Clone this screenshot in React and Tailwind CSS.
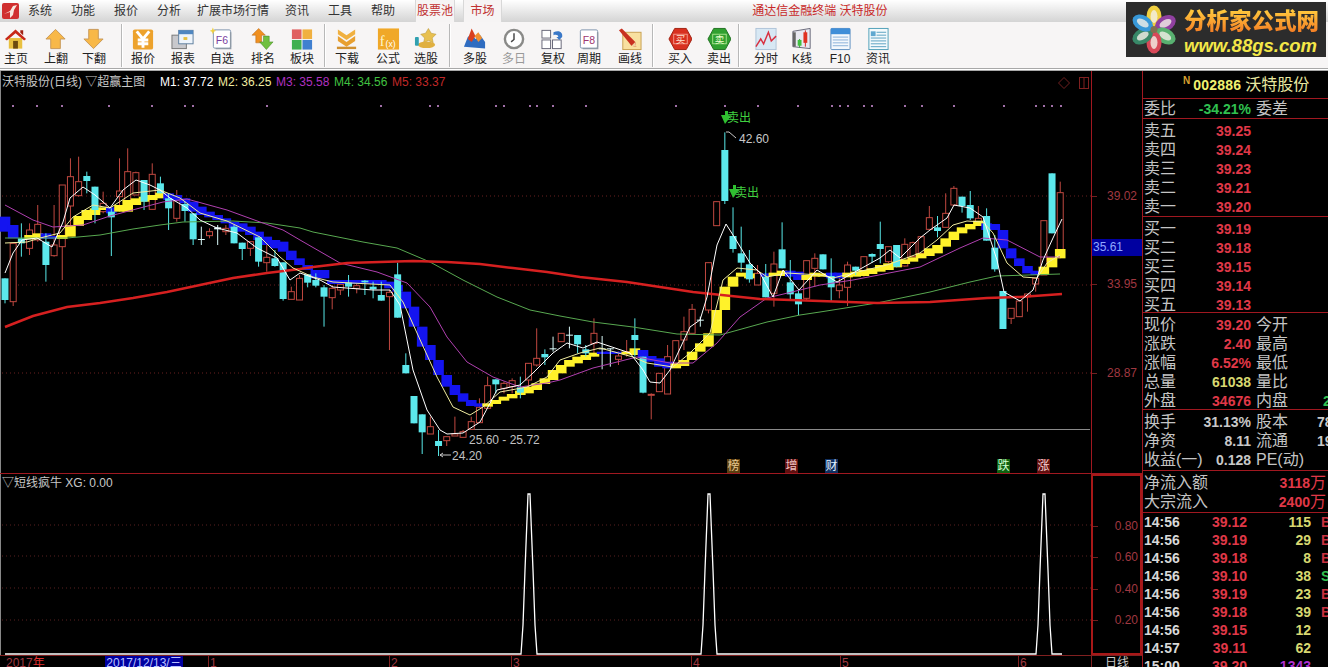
import React from "react";

const candleX = (i) => 5 + 8.18 * i;

// candles per zoom block: type, body top, body bottom, high, low
const candleSegs = [
  { y0: 130, rows: [
    ["c",445,510,445,520],["r",340,515,340,528],["c",325,340,280,380],["r",300,355,280,375],["r",283,330,225,335],["c",335,405,310,455],["r",345,377,225,380],["r",165,350,165,450],["r",140,228,85,290],["r",155,197,80,200],
    ["c",138,153,125,190],["c",170,240,170,280],["r",220,245,185,250],["c",245,262,235,378],["r",183,200,85,245],["r",125,240,55,245],["r",128,195,125,195],["c",150,215,150,240],["r",133,238,100,238],["c",160,190,140,190],
    ["c",205,235,190,300],["r",212,265,180,275],["c",222,243,215,275],["c",250,328,250,345],["w",327,329,290,345],["r",305,317,295,325],["w",292,298,285,345],["r",295,305,285,315],["c",290,340,285,340],["c",338,357,338,390],
    ["r",335,355,335,378],["c",322,395,322,410],["r",382,398,345,425],["c",385,408,360,410],["c",397,507,397,512],
  ]},
  { y0: 230, rows: [
    ["r",185,208,170,208],["r",145,210,135,210],["c",133,158,133,172],["c",150,167,130,172],["c",172,200,165,290],["r",175,203,165,238],["r",163,180,150,195],["c",158,170,135,200],["r",167,175,160,190],["c",152,157,150,195],
    ["c",170,178,155,205],["c",195,212,155,212],["r",187,200,180,360],["c",133,263,98,263],["c",405,430,370,430],["c",498,580,498,580],["c",553,607,553,672],["r",590,612,560,612],["c",633,648,600,678],["r",620,632,620,648],
    ["r",612,618,560,618],["r",605,622,600,622],["r",575,598,560,598],["r",532,578,505,578],["r",467,535,440,535],["c",448,463,448,490],["r",460,475,455,490],["r",452,470,445,490],["c",472,488,440,505],["r",400,450,400,470],
    ["r",385,405,295,410],["c",372,382,358,405],["w",355,358,320,365],
  ]},
  { y0: 100, rows: [
    ["r",700,725,700,725],["w",704,707,680,745],["c",705,733,705,760],["c",748,760,735,770],["r",700,730,655,770],["w",745,747,708,808],["w",745,747,745,800],["r",768,778,755,795],["r",755,760,720,770],["c",705,720,655,770],
    ["c",770,878,770,880],["r",883,886,880,958],["r",820,875,820,875],["r",770,882,735,882],["r",722,790,722,800],["r",695,720,650,750],["r",628,700,612,700],["w",659,661,650,680],["r",488,630,488,640],["r",305,377,305,377],
    ["c",150,303,97,312],["c",408,447,322,458],["c",460,488,380,515],["c",493,538,450,548],["r",520,555,495,555],["c",530,592,492,592],["r",492,580,455,620],["c",448,505,367,505],["c",547,583,480,600],["c",580,613,570,645],
    ["r",482,595,482,600],["r",475,505,460,560],
  ]},
  { y0: 150, rows: [
    ["c",313,358,313,358],["c",378,412,325,455],["r",405,422,370,445],["r",345,412,335,468],["c",350,362,350,375],["r",320,365,320,380],["c",312,320,310,338],["c",282,297,215,340],["r",290,335,290,340],["c",285,350,285,352],
    ["r",283,348,265,350],["r",278,320,275,320],["r",260,310,260,320],["r",203,238,168,240],["c",232,243,198,262],["r",190,232,130,232],["r",115,165,108,168],["c",140,168,140,188],["c",165,205,123,210],["r",205,215,168,215],
    ["c",198,272,175,272],["c",293,358,255,365],["c",423,537,423,537],["r",475,505,475,522],["r",453,500,453,500],["r",432,440,432,485],["r",385,402,385,425],["r",212,375,212,375],["c",70,250,70,250],["r",128,300,95,325],
  ]},
];

// step band under the candles: colour, top, bottom
const bandSegs = [
  { y0: 130, rows: [
    ["b",260,305],["b",285,325],null,["y",315,328],["y",310,325],["b",310,327],["b",318,327],["y",315,327],["y",285,320],["y",258,288],
    ["y",240,270],["y",235,255],["y",232,240],["b",232,250],["y",225,245],["y",210,245],["y",205,225],["y",200,215],["y",195,210],["y",188,205],
    ["b",190,210],["b",195,212],["b",205,220],["b",215,245],["b",230,255],["b",245,262],["b",255,270],["b",265,280],["b",275,295],["b",280,305],
    ["b",290,315],["b",305,330],["b",320,345],["b",330,355],
  ]},
  { y0: 230, rows: [
    ["b",35,65],["b",62,90],["b",85,105],["b",105,120],["b",120,145],["b",120,145],["b",150,162],["b",150,162],["b",150,162],["b",150,162],
    ["b",150,162],["b",150,162],["b",150,162],["b",155,175],["b",165,185],["b",185,235],["b",230,290],["b",290,350],["b",345,390],["b",390,435],
    ["b",435,470],["b",465,495],["b",490,515],["b",510,528],["b",520,530],["y",520,530],["y",510,522],["y",500,512],["y",492,505],["y",482,495],
    ["y",470,490],["y",460,480],["y",445,462],["y",420,450],["y",405,430],["y",390,410],["y",380,400],
  ]},
  { y0: 100, rows: [
    ["y",765,780],["y",758,770],["b",755,762],["b",755,762],["b",755,762],["y",755,763],["y",745,765],["b",750,775],["b",768,785],["b",775,800],
    ["b",785,805],["y",790,805],["y",780,798],["y",755,780],["y",730,755],["y",700,740],["y",630,700],["y",560,630],["y",530,560],["y",518,530],
    ["y",520,535],null,["b",520,530],["y",518,528],["y",512,528],["b",512,530],["b",515,540],["y",525,540],["y",518,530],
  ]},
  { y0: 150, rows: [
    ["y",370,380],["b",368,385],["b",368,385],["y",368,382],["y",365,380],["y",360,378],["y",355,372],["y",345,365],["y",340,360],["y",335,352],
    ["y",328,342],["y",322,335],["y",310,325],["y",295,318],["y",285,310],["y",265,290],["y",245,270],["y",232,250],["y",222,238],["y",212,228],
    ["b",220,240],["b",222,240],["b",240,295],["b",295,325],["b",325,348],["b",348,370],["b",362,375],["y",350,375],["y",322,352],["y",297,325],
  ]},
];

const candles = [];
let candleIdx = 0;
candleSegs.forEach((seg) => seg.rows.forEach((r) => {
  candles.push({ i: candleIdx++, type: r[0], top: seg.y0 + r[1] / 3, bot: seg.y0 + r[2] / 3, hi: seg.y0 + r[3] / 3, lo: seg.y0 + r[4] / 3 });
}));

const bands = [];
let bandIdx = 0;
bandSegs.forEach((seg) => seg.rows.forEach((r) => {
  if (r) bands.push({ i: bandIdx, color: r[0], top: seg.y0 + r[1] / 3, bot: seg.y0 + r[2] / 3 });
  bandIdx++;
}));

const ma5 = "5,327 33,316 67,307 100,303 133,298 167,292 200,285 233,278 267,273 300,269 313,267 347,263 380,262 413,261 447,262 480,264 513,268 547,272 580,277 627,282 693,292 760,299 820,301 877,303 930,302 987,298 1020,297 1062,294";
const ma4 = "5,238 33,238 67,238 100,235 133,229 160,225 183,222 233,221 267,223 300,228 313,232 363,242 397,248 430,262 463,280 497,297 530,310 560,316 593,322 633,327 677,334 720,335 767,322 800,315 820,312 877,303 930,292 970,282 997,276 1060,274";
const ma3 = "5,205 33,220 53,227 83,225 110,216 140,208 163,202 187,199 227,210 260,222 283,230 300,240 340,263 377,272 407,283 430,307 447,337 467,362 493,377 520,387 547,383 560,380 593,368 637,357 670,363 693,363 717,343 740,317 767,298 800,290 820,285 853,280 920,267 960,248 983,238 1007,240 1040,257 1060,257";
const ma2 = "5,243 27,242 40,238 60,233 73,217 93,205 110,208 133,193 160,190 180,198 200,213 227,221 260,237 280,257 293,268 313,277 333,282 390,285 403,302 417,333 437,377 453,407 470,415 483,407 500,392 527,387 547,377 560,360 580,353 600,348 633,357 647,363 673,367 690,353 710,333 723,280 737,268 757,270 767,277 787,273 820,275 833,278 853,273 887,265 920,253 937,240 953,225 967,221 983,222 993,233 1007,263 1023,277 1037,278 1047,263 1060,255";
const ma1 = "5,273 13,253 22,240 37,238 52,247 63,222 70,198 83,187 95,195 110,208 123,190 136,180 150,185 160,190 170,198 187,208 200,220 217,228 237,233 257,248 277,258 290,280 300,273 320,280 333,287 373,290 390,290 400,305 413,370 427,410 440,430 447,434 463,433 480,422 497,390 520,385 533,373 553,353 567,343 583,348 597,342 630,353 643,370 650,382 660,383 670,370 690,327 700,320 707,297 717,245 726,224 733,235 750,263 760,273 773,297 783,270 799,290 817,270 837,282 853,273 880,258 890,250 900,258 920,238 930,230 947,218 954,205 970,208 983,217 997,260 1004,292 1020,301 1033,290 1043,260 1053,238 1062,219";

const signalDots = [13,37,62,109,152,185,193,267,381,430,438,496,504,530,537,553,586,676,725,758,798,832,840,848,864,872,905,922,954,1004,1036,1044,1052,1061];

const menus = [
  { name: "系统", cls: "ml-[9px]" },
  { name: "功能", cls: "ml-[19px]" },
  { name: "报价", cls: "ml-[19px]" },
  { name: "分析", cls: "ml-[19px]" },
  { name: "扩展市场行情", cls: "ml-[16px]" },
  { name: "资讯", cls: "ml-[16px]" },
  { name: "工具", cls: "ml-[19px]" },
  { name: "帮助", cls: "ml-[19px]" },
];

const Doc = ({ text, color = "#7a3fa0" }) => (
  <>
    <rect x="3.5" y="2.5" width="18" height="19" rx="1.5" fill="#fff" stroke="#7d93ad" />
    <path d="M21.5 5v17H6" fill="none" stroke="#8f9aa6" strokeWidth="1.5" />
    <text x="12.5" y="17" textAnchor="middle" fontSize="11" fill={color}>{text}</text>
  </>
);

const icons = {
  home: (
    <>
      <rect x="5" y="11" width="14" height="11" fill="#e8c040" />
      <rect x="9.5" y="14" width="5" height="8" fill="#6b4a10" />
      <path d="M1 12 12 2l11 10-2 1.5L12 6 3 13.5z" fill="#c82818" />
      <path d="M17 3h3v5l-3-2.5z" fill="#a02010" />
    </>
  ),
  up: <path d="M12 2 22 12h-5v10H7V12H2z" fill="#f8b848" stroke="#c89858" />,
  down: <path d="M7 2h10v10h5L12 22 2 12h5z" fill="#f8b848" stroke="#c89858" />,
  yen: (
    <>
      <rect x="2" y="2" width="21" height="21" rx="2" fill="#eda22c" />
      <path d="M6 4l6.500 8L19 4M12.500 12v9M7 13h11M7 17h11" fill="none" stroke="#fff" strokeWidth="3" />
    </>
  ),
  report: (
    <>
      <rect x="1" y="8" width="15" height="14" fill="#c8c8cc" stroke="#777" />
      <rect x="8" y="3" width="15" height="14" fill="#eef4fb" stroke="#5f7f9f" />
      <rect x="8" y="3" width="15" height="4" fill="#4f86c0" />
      <rect x="13" y="10" width="4" height="3" fill="#e8c040" />
    </>
  ),
  f6: (
    <>
      <Doc text="F6" />
      <path d="M3 0l1 2.500L6.500 3.500 4 4.500 3 7 2 4.500-.5 3.500 2 2.500z" fill="#f0d040" />
    </>
  ),
  rank: (
    <>
      <path d="M8 1 15 8h-4v8H5V8H1z" fill="#f09020" stroke="#b06010" strokeWidth=".5" />
      <path d="M13 9h6v6h4l-7 8-7-8h4z" fill="#70c040" stroke="#408020" strokeWidth=".5" />
    </>
  ),
  block: (
    <>
      <rect x="2" y="2" width="10" height="10" fill="#e06060" />
      <rect x="13" y="2" width="10" height="10" fill="#f0b040" />
      <rect x="2" y="13" width="10" height="10" fill="#40b050" />
      <rect x="13" y="13" width="10" height="10" fill="#4080d0" />
    </>
  ),
  dl: (
    <>
      <path d="M3 2l9 6 9-6v5l-9 6-9-6z" fill="#f0b040" />
      <path d="M3 9l9 6 9-6v5l-9 6-9-6z" fill="#e8a030" />
      <rect x="2" y="20" width="20" height="2.500" fill="#d09030" />
    </>
  ),
  fx: (
    <>
      <rect x="2" y="1" width="22" height="22" fill="#f0a828" />
      <text x="4" y="19" fontSize="15" fontFamily="Liberation Serif, serif" fill="#fff8d0">f</text>
      <text x="10" y="20" fontSize="9" fill="#fff">(x)</text>
    </>
  ),
  pick: (
    <>
      <path d="M15 1l3 5 5 1-4 4 1 5-5-2.500L10 16l1-5-4-4 5-1z" fill="#e8c050" stroke="#b09030" strokeWidth=".5" />
      <ellipse cx="13" cy="18" rx="9" ry="3.500" fill="#e0b040" />
      <rect x="1" y="10" width="4" height="9" rx="1" fill="#30a0b0" />
    </>
  ),
  multi: (
    <>
      <path d="M1 20 5 10l4-3 4 5 5-4 5 7 0 7z" fill="#2f6cc0" />
      <path d="M5 12 9 1l4 8-4 6z" fill="#d84020" />
      <path d="M12 9l4-4 4 6-4 4z" fill="#f09030" />
    </>
  ),
  clock: (
    <>
      <circle cx="12.500" cy="12" r="9.500" fill="#fff" stroke="#8a8a88" strokeWidth="2.500" />
      <path d="M12.500 6v6.500l-3 2.500" fill="none" stroke="#444" strokeWidth="1.500" />
    </>
  ),
  adjust: (
    <>
      <rect x="1" y="3" width="9" height="8" fill="#fff" stroke="#667" />
      <rect x="1" y="13" width="9" height="9" fill="#fff" stroke="#667" />
      <rect x="12" y="13" width="9" height="9" fill="#fff" stroke="#667" />
      <path d="M13 5c6-3 10 0 9 5l-3 3-3-3h2c0-2-2-3-5-2z" fill="#3a78c8" />
    </>
  ),
  f8: <Doc text="F8" color="#a03870" />,
  draw: (
    <>
      <rect x="5" y="5" width="19" height="18" fill="#f8e0a0" stroke="#c8a050" />
      <path d="M1 3 4 1l14 14 1 5-5-1z" fill="#c83020" />
      <path d="M14 19l4-4 1 5z" fill="#f0d0a0" />
    </>
  ),
  buy: (
    <>
      <path d="M7 1h12l6 11-6 11H7L1 12z" fill="#d83020" stroke="#a02010" />
      <rect x="6" y="7" width="14" height="10" fill="none" stroke="#f8b0a0" strokeWidth=".8" />
      <text x="13" y="16" textAnchor="middle" fontSize="10" fill="#ffe0d0">买</text>
    </>
  ),
  sell: (
    <>
      <path d="M7 1h12l6 11-6 11H7L1 12z" fill="#30a030" stroke="#207020" />
      <rect x="6" y="7" width="14" height="10" fill="none" stroke="#c0f0a0" strokeWidth=".8" />
      <text x="13" y="16" textAnchor="middle" fontSize="10" fill="#f0ffd0">卖</text>
    </>
  ),
  time: (
    <>
      <rect x="2" y="1" width="21" height="22" fill="#d8e8f4" stroke="#b0c4d8" />
      <path d="M2 20l5-8 3 5 5-12 3 9 5-5" fill="none" stroke="#d83040" strokeWidth="1.500" />
    </>
  ),
  kline: (
    <>
      <path d="M3 4 21 1v21L3 20z" fill="#e8e8f0" stroke="#667" />
      <path d="M3 5h3v15H3z" fill="#666" />
      <path d="M10 12v9" stroke="#30a030" />
      <rect x="8" y="13" width="4" height="6" fill="#40c040" />
      <path d="M16 3v17" stroke="#d02020" />
      <rect x="14" y="5" width="4" height="11" fill="#e03020" />
    </>
  ),
  f10: (
    <>
      <rect x="3" y="1" width="20" height="22" rx="1" fill="#f4f8fc" stroke="#5f8fc0" />
      <rect x="3" y="1" width="20" height="6" fill="#3f8ed8" />
      <path d="M5 10h16M5 13h16M5 16h16M5 19h16" stroke="#88b0d8" />
    </>
  ),
  news: (
    <>
      <rect x="3" y="1" width="20" height="22" fill="#f4fafc" stroke="#4f9fb8" />
      <rect x="5" y="4" width="5" height="5" fill="#60a8d0" />
      <path d="M11 5h10M11 8h10M5 11h16M5 14h16M5 17h16M5 20h16" stroke="#58a0c0" />
    </>
  ),
};

const tools = [
  { label: "主页", icon: "home", cls: "-ml-[2px]" },
  { label: "上翻", icon: "up", cls: "ml-[4px]" },
  { label: "下翻", icon: "down", cls: "ml-[2px]" },
  { sep: true, cls: "ml-[9px]" },
  { label: "报价", icon: "yen", cls: "ml-[2px]" },
  { label: "报表", icon: "report", cls: "ml-[4px]" },
  { label: "自选", icon: "f6", cls: "ml-[3px]" },
  { label: "排名", icon: "rank", cls: "ml-[5px]" },
  { label: "板块", icon: "block", cls: "ml-[3px]" },
  { sep: true, cls: "ml-[4px]" },
  { label: "下载", icon: "dl", cls: "ml-[3px]" },
  { label: "公式", icon: "fx", cls: "ml-[5px]" },
  { label: "选股", icon: "pick", cls: "ml-[2px]" },
  { sep: true, cls: "ml-[5px]" },
  { label: "多股", icon: "multi", cls: "ml-[6px]" },
  { label: "多日", icon: "clock", cls: "ml-[3px]", off: true },
  { label: "复权", icon: "adjust", cls: "ml-[3px]" },
  { label: "周期", icon: "f8", cls: "ml-0" },
  { label: "画线", icon: "draw", cls: "ml-[5px]" },
  { sep: true, cls: "ml-[4px]" },
  { label: "买入", icon: "buy", cls: "ml-[8px]" },
  { label: "卖出", icon: "sell", cls: "ml-[3px]" },
  { sep: true, cls: "ml-[1px]" },
  { label: "分时", icon: "time", cls: "ml-[8px]" },
  { label: "K线", icon: "kline", cls: "ml-0" },
  { label: "F10", icon: "f10", cls: "ml-[2px]" },
  { label: "资讯", icon: "news", cls: "ml-[2px]" },
];

const MenuBar = () => (
  <div className="flex h-[22px] items-center bg-gradient-to-b from-white to-[#d4d4d4] text-xs text-[#333]">
    <svg width="17" height="16" viewBox="0 0 17 16" className="ml-[2px]">
      <rect width="17" height="16" rx="2" fill="#d03030" />
      <path d="M2 11 8 8l3-5 4-1-3 5-1 5-3 3V9z" fill="#f8e8e0" />
    </svg>
    {menus.map((m) => (
      <span key={m.name} className={m.cls}>{m.name}</span>
    ))}
    <span className="ml-[20px] flex h-[22px] w-[40px] items-center justify-center border-x border-[#d8d8d8] bg-[#f6f4f4] text-[#c03030]">股票池</span>
    <span className="ml-[8px] flex h-[22px] w-[39px] items-center justify-center border-x border-[#d8d8d8] bg-[#f6f4f4] text-[#c03030]">市场</span>
    <span className="ml-[250px] text-[#c82828]">通达信金融终端&nbsp;沃特股份</span>
  </div>
);

const Toolbar = () => (
  <div className="flex h-[46px] items-start bg-[#f7f5f5]">
    {tools.map((t, i) =>
      t.sep ? (
        <div key={i} className={`${t.cls} mt-[2px] h-[43px] w-[2px] border-r border-white bg-[#b8b8b8]`} />
      ) : (
        <div key={i} className={`${t.cls} flex w-[36px] shrink-0 flex-col items-center pt-[5px]`}>
          <svg width="24" height="24" viewBox="0 0 25 24">{icons[t.icon]}</svg>
          <span className={`mt-[1px] whitespace-nowrap text-xs leading-[14px] ${t.off ? "text-[#999]" : "text-[#222]"}`}>{t.label}</span>
        </div>
      )
    )}
  </div>
);

const Logo = () => (
  <div className="absolute left-[1126px] top-[2px] flex h-[55px] w-[200px] bg-[#2c2c2c]">
    <svg width="56" height="55" viewBox="-28 -27 56 54" className="shrink-0">
      {[["#f0d040", 0], ["#9040a0", 62], ["#58b070", 120], ["#d84858", 180], ["#388868", 240], ["#3898d8", 300]].map(([c, a]) => (
        <g key={a} transform={`rotate(${a})`}>
          <ellipse cx="0" cy="-13" rx="7.500" ry="11" fill={c} />
          <ellipse cx="0" cy="-13" rx="3.500" ry="6.500" fill="#f4f0e8" opacity=".8" />
        </g>
      ))}
      <circle r="3.500" fill="#807050" />
    </svg>
    <div className="ml-[2px] flex flex-col pt-[6px] leading-none">
      <span className="whitespace-nowrap bg-gradient-to-b from-[#ffd040] to-[#f07020] bg-clip-text text-[22.500px] font-black leading-[28px] text-transparent">分析家公式网</span>
      <span className="mt-[1px] whitespace-nowrap text-[18.500px] font-bold italic leading-[18px] text-[#f4e848]">www.88gs.com</span>
    </div>
  </div>
);

const MainPlot = () => (
  <svg width="1091" height="402" viewBox="0 71 1091 402" className="block">
    {[196, 285, 373].map((y) => (
      <line key={y} x1="2" x2="1091" y1={y} y2={y} stroke="#6a2020" strokeDasharray="1 3" />
    ))}
    {signalDots.map((x) => (
      <rect key={x} x={x - 1} y="105" width="2" height="2" fill="#a070a8" />
    ))}
    <line x1="470" x2="1090" y1="429.500" y2="429.500" stroke="#8a8a8a" />

    {candles.filter((c) => c.type === "r").map((c) => (
      <g key={c.i} stroke="#c04840">
        <line x1={candleX(c.i)} x2={candleX(c.i)} y1={c.hi} y2={c.lo} />
        <rect x={candleX(c.i) - 3} y={c.top} width="6" height={c.bot - c.top} fill="#000" />
      </g>
    ))}
    {bands.map((b) => (
      <rect key={b.i} x={candleX(b.i) - 5.300} y={b.top} width="10.600" height={b.bot - b.top} fill={b.color === "y" ? "#fff22a" : "#1414f0"} />
    ))}
    {candles.filter((c) => c.type !== "r").map((c) => (
      <g key={c.i}>
        <line x1={candleX(c.i)} x2={candleX(c.i)} y1={c.hi} y2={c.lo} stroke={c.type === "w" ? "#d8f8f8" : "#58e8e8"} />
        <rect x={candleX(c.i) - 3.500} y={c.top} width="7" height={Math.max(c.bot - c.top, 1)} fill={c.type === "w" ? "#e0ffff" : "#5ce8ec"} />
      </g>
    ))}

    <polyline points={ma4} fill="none" stroke="#58a850" />
    <polyline points={ma3} fill="none" stroke="#b040b0" />
    <polyline points={ma5} fill="none" stroke="#d62020" strokeWidth="2.500" />
    <polyline points={ma2} fill="none" stroke="#f0eca0" />
    <polyline points={ma1} fill="none" stroke="#fff" />

    <path d="M721 115h4v-4h3v4l3 1-6 8z" fill="#30c030" />
    <text x="727" y="122" fontSize="12" fill="#40d040">卖出</text>
    <path d="M729 189h4v-4h3v4l3 1-6 8z" fill="#30c030" />
    <text x="735" y="197" fontSize="12" fill="#40d040">卖出</text>

    <path d="M726 132h3l7 6" fill="none" stroke="#c8c8c8" />
    <text x="739" y="143" fontSize="12" fill="#c8c8c8">42.60</text>
    <text x="469" y="444" fontSize="12" fill="#c0c0c0">25.60 - 25.72</text>
    <path d="M451 455h-11l3-2m-3 2 3 2" fill="none" stroke="#c8c8c8" />
    <text x="452" y="460" fontSize="12" fill="#c0c0c0">24.20</text>

    <path d="M1064 77.500l5.500 5.500-5.500 5.500-5.500-5.500z" fill="none" stroke="#702020" />
    <rect x="1079.500" y="77.500" width="9" height="11" fill="none" stroke="#802020" />
    <line x1="1084" x2="1084" y1="77" y2="89" stroke="#802020" />
  </svg>
);

const events = [
  { t: "榜", x: 726, bg: "#5a3e10", fg: "#e8c890" },
  { t: "增", x: 784, bg: "#601010", fg: "#f0c0c0" },
  { t: "财", x: 824, bg: "#103060", fg: "#e0f0ff" },
  { t: "跌", x: 996, bg: "#106010", fg: "#d0ffd0" },
  { t: "涨", x: 1036, bg: "#601010", fg: "#f8d0d0" },
];

const Axis = ({ labels }) => (
  <div className="relative w-[50px] shrink-0 text-xs text-[#a03840]">
    {labels.map(([v, y]) => (
      <React.Fragment key={v}>
        <span className="absolute left-0 h-px w-[5px] bg-[#702020]" style={{ top: y }} />
        <span className="absolute right-[5px] leading-[14px]" style={{ top: y - 7 }}>{v}</span>
      </React.Fragment>
    ))}
  </div>
);

const MainPane = () => (
  <div className="flex h-[403px] border-b border-[#a01820]">
    <div className="relative w-[1091px] shrink-0 border-l border-[#888]">
      <div className="absolute -left-px top-0"><MainPlot /></div>
      <div className="absolute left-[1px] top-[4px] flex whitespace-nowrap text-xs leading-[14px] text-[#c8c8c8]">
        <span className="w-[158px]">沃特股份(日线) ▽超赢主图</span>
        <span className="w-[58px] text-white">M1: 37.72</span>
        <span className="w-[58px] text-[#f0eca0]">M2: 36.25</span>
        <span className="w-[58px] text-[#b030c0]">M3: 35.58</span>
        <span className="w-[58px] text-[#40c040]">M4: 34.56</span>
        <span className="w-[58px] text-[#c02828]">M5: 33.37</span>
      </div>
      {events.map((e) => (
        <span
          key={e.t}
          className="absolute top-[388px] h-[14px] w-[13px] text-center text-xs leading-[14px]"
          style={{ left: e.x, background: e.bg, color: e.fg }}
        >
          {e.t}
        </span>
      ))}
    </div>
    <div className="relative flex border-l border-[#a01820]">
      <Axis labels={[["39.02", 125], ["33.95", 213], ["28.87", 302]]} />
      <span className="absolute left-0 top-[168px] h-[17px] w-[50px] bg-[#0000a0] pl-px text-xs leading-[17px] text-[#90a8ff]">35.61</span>
    </div>
  </div>
);

const SubPane = () => (
  <div className="flex h-[181px]">
    <div className="relative w-[1091px] shrink-0 border-l border-[#888]">
      <svg width="1091" height="181" viewBox="0 474 1091 181" className="absolute -left-px top-0 block">
        {[525, 556, 588, 620].map((y) => (
          <line key={y} x1="2" x2="1091" y1={y} y2={y} stroke="#5a2020" strokeDasharray="1 3" />
        ))}
        <polyline
          points="5,654 521,654 523,625 525,570 528,494 530,494 533,570 535,625 537,654 701,654 703,625 705,570 708,494 710,494 713,570 715,625 717,654 1036,654 1038,625 1040,570 1043,494 1045,494 1048,570 1050,625 1052,654 1062,654"
          fill="none"
          stroke="#fff"
          strokeWidth="1.300"
        />
      </svg>
      <span className="absolute left-[1px] top-[2px] whitespace-nowrap text-xs leading-[14px] text-[#c8c8c8]">▽短线疯牛 XG: 0.00</span>
    </div>
    <div className="w-[51px] shrink-0 border-2 border-[#a81818]">
      <Axis labels={[["0.80", 50], ["0.60", 81], ["0.40", 113], ["0.20", 144]]} />
    </div>
  </div>
);

const TimeAxis = () => (
  <div className="flex h-[12px] border-t border-[#802020] text-xs leading-[14px]">
    <div className="relative w-[1091px] shrink-0 overflow-hidden text-[#a03840]">
      <span className="absolute left-[6px] top-0">2017<span className="text-[#e03030]">年</span></span>
      <span className="absolute left-[105px] top-0 w-[78px] bg-[#0000a0] text-center text-[#b8c0ff]">2017/12/13/三</span>
      {[["1", 208], ["2", 389], ["3", 511], ["4", 691], ["5", 840], ["6", 1018]].map(([t, x]) => (
        <span key={t} className="absolute top-0 border-l border-[#802020] pl-px" style={{ left: x }}>{t}</span>
      ))}
    </div>
    <div className="w-[51px] shrink-0 border-l border-[#802020] text-center text-[#c8c8c8]">日线</div>
  </div>
);

const Row = ({ label, value, cls = "text-[#e03848]", label2, extra, extraCls }) => (
  <div className="flex h-[19px] items-center whitespace-nowrap">
    <span className="w-[38px] shrink-0 text-base text-[#c4c4c4]">{label}</span>
    <span className={`w-[69px] shrink-0 text-right text-sm font-bold ${cls}`}>{value}</span>
    {label2 && <span className="ml-[5px] w-[32px] shrink-0 text-base text-[#c4c4c4]">{label2}</span>}
    {extra && <span className={`text-sm font-bold ${extraCls}`}>{extra}</span>}
  </div>
);

const ticks = [
  ["14:56", "39.12", "115", "B"], ["14:56", "39.19", "29", "B"], ["14:56", "39.18", "8", "B"],
  ["14:56", "39.10", "38", "S"], ["14:56", "39.19", "23", "B"], ["14:56", "39.18", "39", "B"],
  ["14:56", "39.15", "12", ""], ["14:57", "39.11", "62", ""], ["15:00", "39.20", "1343", ""],
];

const RightPanel = () => (
  <div className="w-[186px] shrink-0 overflow-hidden border-l border-[#a01820] pl-px">
    <div className="-ml-px flex h-[28px] items-center border-b border-[#a01820] pl-[40px] whitespace-nowrap">
      <span className="mb-[8px] text-[10px] font-bold text-[#d8a030]">N</span>
      <span className="ml-[3px] text-sm font-bold tracking-[0.2px] text-[#f0f070]">002886</span>
      <span className="ml-[4px] text-base text-[#e8e8a0]">沃特股份</span>
    </div>
    <div className="-ml-px h-[20px] border-b border-[#a01820] pl-px">
      <Row label="委比" value="-34.21%" cls="text-[#30c050]" label2="委差" />
    </div>
    <div className="-ml-px h-[98px] border-b border-[#a01820] pl-px pt-[2px]">
      {[["卖五", "39.25"], ["卖四", "39.24"], ["卖三", "39.23"], ["卖二", "39.21"], ["卖一", "39.20"]].map(([l, v]) => (
        <Row key={l} label={l} value={v} />
      ))}
    </div>
    <div className="-ml-px h-[96px] border-b border-[#a01820] pl-px pt-[2px]">
      {[["买一", "39.19"], ["买二", "39.18"], ["买三", "39.15"], ["买四", "39.14"], ["买五", "39.13"]].map(([l, v]) => (
        <Row key={l} label={l} value={v} />
      ))}
    </div>
    <div className="-ml-px h-[97px] border-b border-[#a01820] pl-px pt-[2px]">
      <Row label="现价" value="39.20" label2="今开" />
      <Row label="涨跌" value="2.40" label2="最高" />
      <Row label="涨幅" value="6.52%" label2="最低" />
      <Row label="总量" value="61038" cls="text-[#d8d870]" label2="量比" />
      <Row label="外盘" value="34676" label2="内盘" extra="2" extraCls="ml-[35px] text-[#30c050]" />
    </div>
    <div className="-ml-px h-[61px] border-b border-[#a01820] pl-px pt-[2px]">
      <Row label="换手" value="31.13%" cls="text-[#c8c8c8]" label2="股本" extra="78" extraCls="ml-[29px] text-[#c8c8c8]" />
      <Row label="净资" value="8.11" cls="text-[#c8c8c8]" label2="流通" extra="19" extraCls="ml-[29px] text-[#c8c8c8]" />
      <Row label="收益(一)" value="0.128" cls="text-[#c8c8c8]" label2="PE(动)" />
    </div>
    <div className="-ml-px h-[42px] border-b border-[#a01820] pl-px pt-[2px]">
      {[["净流入额", "3118"], ["大宗流入", "2400"]].map(([l, v]) => (
        <div key={l} className="flex h-[19px] items-center justify-between whitespace-nowrap pr-[2px]">
          <span className="text-base text-[#c4c4c4]">{l}</span>
          <span className="text-sm font-bold text-[#e03848]">{v}<span className="text-base font-normal">万</span></span>
        </div>
      ))}
    </div>
    {ticks.map(([t, p, q, f], i) => (
      <div key={i} className="flex h-[18px] items-center whitespace-nowrap text-sm font-bold">
        <span className="w-[40px] shrink-0 text-[#d8d8d8]">{t}</span>
        <span className="w-[63px] shrink-0 text-right text-[#e03848]">{p}</span>
        <span className={`w-[64px] shrink-0 text-right ${q === "1343" ? "text-[#b030d0]" : "text-[#d8d870]"}`}>{q}</span>
        <span className={`ml-[10px] ${f === "S" ? "text-[#30c050]" : "text-[#c83040]"}`}>{f}</span>
      </div>
    ))}
  </div>
);

const App = () => {
  return (
    <div className="relative flex h-[667px] w-[1328px] flex-col overflow-hidden bg-black font-['Liberation_Sans','Noto_Sans_CJK_SC',sans-serif]">
      <MenuBar />
      <Toolbar />
      <div className="h-[3px] shrink-0 border-y border-[#a8a8a8] bg-white" />
      <div className="flex min-h-0 flex-1">
        <div className="w-[1142px] shrink-0">
          <MainPane />
          <SubPane />
          <TimeAxis />
        </div>
        <RightPanel />
      </div>
      <Logo />
    </div>
  );
};

export default App;
